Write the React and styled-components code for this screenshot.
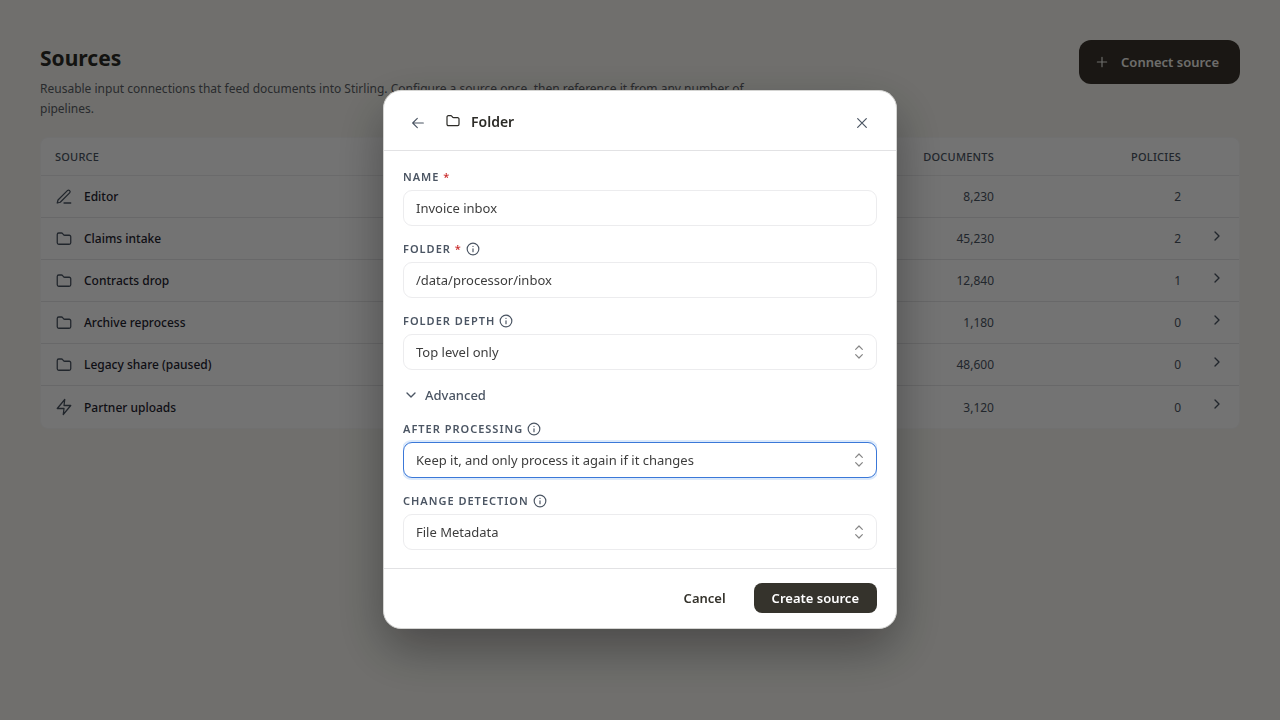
import { useState } from "react";
import styled, { createGlobalStyle } from "styled-components";

const GlobalStyle = createGlobalStyle`
    * {
        box-sizing: border-box;
    }
    body {
        margin: 0;
        background: #f8f7f2;
        color: #2c2b27;
        font-family: "Noto Sans", "Open Sans", sans-serif;
        font-size: 13px;
    }
    button, input, select {
        font-family: inherit;
    }
`

const Svg = styled.svg`
    display: block;
    flex: none;
    fill: none;
    stroke: currentColor;
    stroke-linecap: round;
    stroke-linejoin: round;
`

const paths = {
    folder: <path d="M3 6a2 2 0 0 1 2-2h3.600a2 2 0 0 1 1.600.800l1.100 1.400a2 2 0 0 0 1.600.800H19a2 2 0 0 1 2 2V17a2 2 0 0 1-2 2H5a2 2 0 0 1-2-2z" />,
    pen: <path d="M12 20h9M16.500 3.500a2.120 2.120 0 0 1 3 3L7 19l-4 1 1-4z" />,
    zap: <path d="M13 2 3 14h9l-1 8 10-12h-9z" />,
    plus: <path d="M12 5v14M5 12h14" />,
    back: <path d="M20 12H4M11 19l-7-7 7-7" />,
    close: <path d="M18.500 5.500l-13 13M5.500 5.500l13 13" />,
    down: <path d="m6 9 6 6 6-6" />,
    right: <path d="m9 18 6-6-6-6" />,
    updown: <path d="m7 16 5 5 5-5M7 8l5-5 5 5" />,
    info: <><circle cx="12" cy="12" r="10" /><path d="M12 16.500v-5M12 7.500h.01" /></>,
}

function Icon ({ name, size = 16, stroke = 2 }) {
    return (
        <Svg width={size} height={size} viewBox="0 0 24 24" strokeWidth={stroke} aria-hidden="true">
            {paths[name]}
        </Svg>
    )
}

const Page = styled.main`
    min-height: 100vh;
    padding: 40px;
`
const PageHeader = styled.header`
    display: flex;
    justify-content: space-between;
    align-items: flex-start;
    gap: 24px;
    margin-bottom: 18px;
`
const Title = styled.h1`
    margin: 4px 0 7px;
    font-size: 21px;
    line-height: 28px;
    font-weight: 700;
`
const Subtitle = styled.p`
    margin: 0;
    max-width: 720px;
    font-size: 12px;
    line-height: 20px;
    color: #5c5f66;
`
const ConnectButton = styled.button`
    display: flex;
    align-items: center;
    gap: 11px;
    height: 44px;
    padding: 0 21px 0 15px;
    border: 0;
    border-radius: 12px;
    background: #3a342d;
    color: #f3f2ee;
    font-size: 13px;
    font-weight: 600;
    white-space: nowrap;
`

const TableCard = styled.div`
    border: 1px solid #f9f9f9;
    border-radius: 8px;
    background: #fff;
    overflow: hidden;
`
const Table = styled.table`
    width: 100%;
    border-collapse: separate;
    border-spacing: 0;
    table-layout: fixed;
`
const Col = styled.col`
    width: ${(p) => p.$width};
`
const Th = styled.th`
    height: 38px;
    padding: 0 14px;
    border-bottom: 1px solid #ececee;
    text-align: ${(p) => p.$align || "left"};
    font-size: 11px;
    font-weight: 500;
    letter-spacing: 0.02em;
    color: #4b5563;
`
const Row = styled.tr`
    &:not(:last-child) td {
        border-bottom: 1px solid #e6e6e8;
    }
`
const Td = styled.td`
    height: 42px;
    padding: 0 14px;
    text-align: ${(p) => p.$align || "left"};
    font-size: 12px;
    color: #4b5563;
`
const ChevronTd = styled(Td)`
    padding-bottom: 6px;
`
const SourceName = styled.div`
    display: flex;
    align-items: center;
    gap: 11px;
`
const SourceText = styled.span`
    font-weight: 500;
    color: #1f2430;
`

const Overlay = styled.div`
    position: fixed;
    inset: 0;
    display: flex;
    align-items: center;
    justify-content: center;
    padding-bottom: 2px;
    background: rgba(0, 0, 0, 0.55);
`
const Dialog = styled.form`
    width: 100%;
    max-width: 514px;
    border: 1px solid #d4d4d2;
    border-radius: 18px;
    background: #fff;
    box-shadow: 0 20px 50px rgba(0, 0, 0, 0.35);
`
const DialogHeader = styled.header`
    display: flex;
    align-items: center;
    height: 60px;
    padding: 2px 19px 0;
    border-bottom: 1px solid #e2e2e4;
`
const IconButton = styled.button`
    display: flex;
    align-items: center;
    justify-content: center;
    width: 30px;
    height: 30px;
    padding: 3px 0 0;
    border: 0;
    border-radius: 6px;
    background: none;
    color: #4b5563;
`
const DialogTitle = styled.h2`
    display: flex;
    flex: 1;
    align-items: center;
    gap: 10px;
    margin: 0 0 0 12px;
    font-size: 14px;
    font-weight: 600;
`
const DialogBody = styled.div`
    display: flex;
    flex-direction: column;
    gap: 14px;
    padding: 17px 19px 18px;
`
const Field = styled.div`
    display: flex;
    flex-direction: column;
    gap: 4px;
    overflow-x: clip;
`
const LabelRow = styled.div`
    display: flex;
    align-items: center;
    gap: 4px;
    height: 18px;
    color: #4b5563;
`
const Label = styled.label`
    font-size: 11px;
    font-weight: 600;
    letter-spacing: 1px;
`
const Required = styled.span`
    color: #c92a2a;
    font-weight: 500;
`
const control = `
    display: block;
    width: 100%;
    height: 36px;
    padding: 0 12px;
    border: 1px solid #ececee;
    border-radius: 9px;
    outline: 0;
    background: #fff;
    color: #3d3d3d;
    font-size: 13px;
`
const TextInput = styled.input`
    ${control}
`
const Select = styled.select`
    ${control}
    appearance: none;
    border-color: ${(p) => (p.$active ? "#3b78d8" : "#ececee")};
    box-shadow: ${(p) => (p.$active ? "0 0 0 2px #dbe9fb" : "none")};
`
const SelectWrap = styled.div`
    position: relative;
`
const SelectIcon = styled.span`
    position: absolute;
    top: 10px;
    right: 10px;
    color: #868686;
    pointer-events: none;
`
const AdvancedToggle = styled.button`
    display: flex;
    align-items: center;
    align-self: flex-start;
    gap: 6px;
    height: 22px;
    padding: 0;
    border: 0;
    background: none;
    color: #4b5563;
    font-size: 13px;
    font-weight: 500;
`
const DialogFooter = styled.footer`
    display: flex;
    align-items: center;
    justify-content: flex-end;
    gap: 10px;
    height: 60px;
    padding: 0 19px;
    border-top: 1px solid #e2e2e4;
`
const FooterButton = styled.button`
    height: 30px;
    padding: 0 18px;
    border: 0;
    border-radius: 8px;
    background: ${(p) => (p.$primary ? "#35332c" : "none")};
    color: ${(p) => (p.$primary ? "#fff" : "#35332c")};
    font-size: 13px;
    font-weight: 600;
`

const sources = [
    { name: "Editor", icon: "pen", documents: "8,230", policies: 2 },
    { name: "Claims intake", icon: "folder", documents: "45,230", policies: 2, open: true },
    { name: "Contracts drop", icon: "folder", documents: "12,840", policies: 1, open: true },
    { name: "Archive reprocess", icon: "folder", documents: "1,180", policies: 0, open: true },
    { name: "Legacy share (paused)", icon: "folder", documents: "48,600", policies: 0, open: true },
    { name: "Partner uploads", icon: "zap", documents: "3,120", policies: 0, open: true },
]

function FieldLabel ({ id, text, required, info }) {
    return (
        <LabelRow>
            <Label htmlFor={id}>
                {text}
                {required && <Required> *</Required>}
            </Label>
            {info && <Icon name="info" size={14} />}
        </LabelRow>
    )
}

function SelectField ({ id, text, options, active }) {
    return (
        <Field>
            <FieldLabel id={id} text={text} info />
            <SelectWrap>
                <Select id={id} $active={active}>
                    {options.map((o) => <option key={o}>{o}</option>)}
                </Select>
                <SelectIcon><Icon name="updown" stroke={1.8} /></SelectIcon>
            </SelectWrap>
        </Field>
    )
}

function SourcesTable () {
    return (
        <TableCard>
            <Table>
                <colgroup>
                    <Col />
                    <Col $width="22%" />
                    <Col $width="187px" />
                    <Col $width="44px" />
                </colgroup>
                <thead>
                    <tr>
                        <Th>SOURCE</Th>
                        <Th $align="right">DOCUMENTS</Th>
                        <Th $align="right">POLICIES</Th>
                        <Th />
                    </tr>
                </thead>
                <tbody>
                    {sources.map((s) => (
                        <Row key={s.name}>
                            <Td>
                                <SourceName>
                                    <Icon name={s.icon} size={18} stroke={1.7} />
                                    <SourceText>{s.name}</SourceText>
                                </SourceName>
                            </Td>
                            <Td $align="right">{s.documents}</Td>
                            <Td $align="right">{s.policies}</Td>
                            <ChevronTd>{s.open && <Icon name="right" />}</ChevronTd>
                        </Row>
                    ))}
                </tbody>
            </Table>
        </TableCard>
    )
}

function SourceDialog () {
    const [name, setName] = useState("Invoice inbox")
    const [folder, setFolder] = useState("/data/processor/inbox")
    const [advanced, setAdvanced] = useState(true)

    return (
        <Overlay>
            <Dialog role="dialog" aria-modal="true" aria-labelledby="dialog-title">
                <DialogHeader>
                    <IconButton type="button" aria-label="Back"><Icon name="back" stroke={1.7} /></IconButton>
                    <DialogTitle id="dialog-title">
                        <Icon name="folder" stroke={1.8} />
                        Folder
                    </DialogTitle>
                    <IconButton type="button" aria-label="Close"><Icon name="close" stroke={1.8} /></IconButton>
                </DialogHeader>
                <DialogBody>
                    <Field>
                        <FieldLabel id="name" text="NAME" required />
                        <TextInput id="name" value={name} onChange={(e) => setName(e.target.value)} />
                    </Field>
                    <Field>
                        <FieldLabel id="folder" text="FOLDER" required info />
                        <TextInput id="folder" value={folder} onChange={(e) => setFolder(e.target.value)} />
                    </Field>
                    <SelectField id="depth" text="FOLDER DEPTH" options={["Top level only", "Include subfolders"]} />
                    <AdvancedToggle type="button" aria-expanded={advanced} onClick={() => setAdvanced(!advanced)}>
                        <Icon name={advanced ? "down" : "right"} />
                        Advanced
                    </AdvancedToggle>
                    {advanced && (
                        <>
                            <SelectField id="after" text="AFTER PROCESSING" options={["Keep it, and only process it again if it changes"]} active />
                            <SelectField id="detection" text="CHANGE DETECTION" options={["File Metadata"]} />
                        </>
                    )}
                </DialogBody>
                <DialogFooter>
                    <FooterButton type="button">Cancel</FooterButton>
                    <FooterButton type="submit" $primary>Create source</FooterButton>
                </DialogFooter>
            </Dialog>
        </Overlay>
    )
}

function App () {
    return (
        <>
            <GlobalStyle />
            <Page>
                <PageHeader>
                    <div>
                        <Title>Sources</Title>
                        <Subtitle>
                            Reusable input connections that feed documents into Stirling. Configure a source once, then reference it from any number of pipelines.
                        </Subtitle>
                    </div>
                    <ConnectButton type="button">
                        <Icon name="plus" stroke={1.7} />
                        Connect source
                    </ConnectButton>
                </PageHeader>
                <SourcesTable />
            </Page>
            <SourceDialog />
        </>
    )
}

export default App;
